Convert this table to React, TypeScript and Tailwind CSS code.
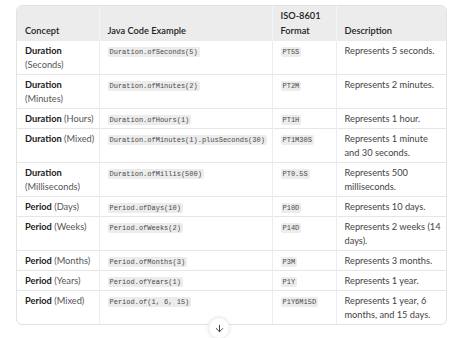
import { ArrowDown } from "lucide-react";

type Row = {
  kind: string;
  sub: string;
  code: string;
  iso: string;
  desc: string;
};

const rows: Row[] = [
  { kind: "Duration", sub: "(Seconds)", code: "Duration.ofSeconds(5)", iso: "PT5S", desc: "Represents 5 seconds." },
  { kind: "Duration", sub: "(Minutes)", code: "Duration.ofMinutes(2)", iso: "PT2M", desc: "Represents 2 minutes." },
  { kind: "Duration", sub: "(Hours)", code: "Duration.ofHours(1)", iso: "PT1H", desc: "Represents 1 hour." },
  { kind: "Duration", sub: "(Mixed)", code: "Duration.ofMinutes(1).plusSeconds(30)", iso: "PT1M30S", desc: "Represents 1 minute and 30 seconds." },
  { kind: "Duration", sub: "(Milliseconds)", code: "Duration.ofMillis(500)", iso: "PT0.5S", desc: "Represents 500 milliseconds." },
  { kind: "Period", sub: "(Days)", code: "Period.ofDays(10)", iso: "P10D", desc: "Represents 10 days." },
  { kind: "Period", sub: "(Weeks)", code: "Period.ofWeeks(2)", iso: "P14D", desc: "Represents 2 weeks (14 days)." },
  { kind: "Period", sub: "(Months)", code: "Period.ofMonths(3)", iso: "P3M", desc: "Represents 3 months." },
  { kind: "Period", sub: "(Years)", code: "Period.ofYears(1)", iso: "P1Y", desc: "Represents 1 year." },
  { kind: "Period", sub: "(Mixed)", code: "Period.of(1, 6, 15)", iso: "P1Y6M15D", desc: "Represents 1 year, 6 months, and 15 days." },
];

const Code = ({ children }: { children: string }) => (
  <code className="inline-block rounded-[2px] bg-[#ececec] px-[2px] font-['Liberation_Mono',monospace] text-[7px] leading-[10px] text-[#4a4a4a]">
    {children}
  </code>
);

const App = () => {
  return (
    <div className="relative h-[338px] w-[474px] overflow-hidden bg-white font-['Lato',sans-serif] text-[9.25px] text-[#444]">
      <div className="ml-[16px] mt-[5px] w-[431px] overflow-hidden rounded-[6px] border border-[#e3e3e3]">
        <table className="w-full table-fixed border-collapse">
          <colgroup>
            <col className="w-[82px]" />
            <col className="w-[173px]" />
            <col className="w-[64px]" />
            <col />
          </colgroup>
          <thead className="bg-[#ececec]">
            <tr className="h-[35px] text-left align-bottom leading-[15px] text-[#222]">
              <th className="pb-[3px] pl-[8px] pr-[4px] font-semibold">Concept</th>
              <th className="border-l border-[#f5f5f5] pb-[3px] pl-[8px] pr-[4px] font-semibold">Java Code Example</th>
              <th className="border-l border-[#f5f5f5] pb-[3px] pl-[8px] pr-[4px] font-semibold">ISO-8601 Format</th>
              <th className="border-l border-[#f5f5f5] pb-[3px] pl-[8px] pr-[4px] font-semibold">Description</th>
            </tr>
          </thead>
          <tbody>
            {rows.map((r, i) => (
              <tr
                key={i}
                className="border-b border-[#e6e6e6] align-top leading-[14px] last:border-b-0"
              >
                <td className="py-[2.5px] pl-[8px] pr-[3px]">
                  <span className="font-bold text-[#222]">{r.kind}</span>{" "}
                  <span className="text-[#555]">{r.sub}</span>
                </td>
                <td className="border-l border-[#ececec] py-[2.5px] pl-[8px] pr-[4px]">
                  <Code>{r.code}</Code>
                </td>
                <td className="border-l border-[#ececec] py-[2.5px] pl-[8px] pr-[4px]">
                  <Code>{r.iso}</Code>
                </td>
                <td className="border-l border-[#ececec] py-[2.5px] pl-[8px] pr-[2px]">{r.desc}</td>
              </tr>
            ))}
          </tbody>
        </table>
      </div>
      <button className="absolute left-[208px] top-[317px] flex h-[22px] w-[22px] items-center justify-center rounded-full border border-[#ececec] bg-white shadow-[0_0_4px_rgba(0,0,0,0.08)]">
        <ArrowDown size={11} strokeWidth={2} color="#333" />
      </button>
    </div>
  );
};

export default App;
